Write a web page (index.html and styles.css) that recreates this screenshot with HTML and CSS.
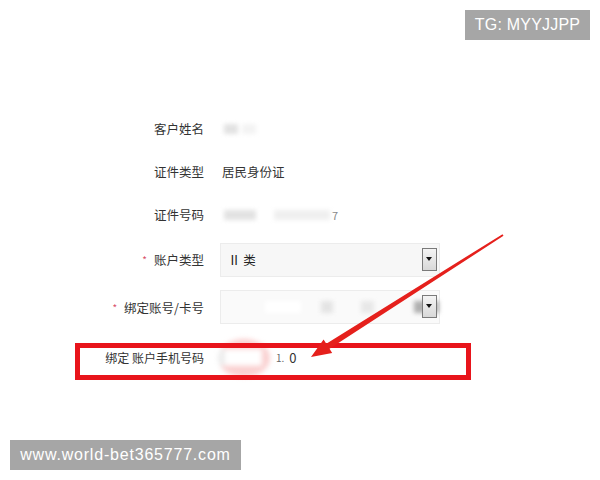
FILE: index.html
```html
<!DOCTYPE html>
<html lang="zh">
<head>
    <meta charset="UTF-8">
    <title>绑定账户信息</title>
    <link rel="stylesheet" href="styles.css">
</head>
<body>
    <div class="form">
        <div class="row">
            <div class="label">客户姓名</div>
            <div class="value"><span class="blur blur-name"></span></div>
        </div>
        <div class="row">
            <div class="label">证件类型</div>
            <div class="value">居民身份证</div>
        </div>
        <div class="row">
            <div class="label">证件号码</div>
            <div class="value">
                <span class="blur blur-id1"></span>
                <span class="blur blur-id2"></span>
                <span class="faint">7</span>
            </div>
        </div>
        <div class="row row-select">
            <div class="label"><span class="req">*</span>账户类型</div>
            <div class="select">
                <span class="select-text">Ⅱ 类</span>
                <span class="drop"></span>
            </div>
        </div>
        <div class="row row-select">
            <div class="label"><span class="req">*</span>绑定账号/卡号</div>
            <div class="select select-blurred">
                <span class="blur blur-c1"></span>
                <span class="blur blur-c2"></span>
                <span class="blur blur-c3"></span>
                <span class="blur blur-c4"></span>
                <span class="drop"></span>
            </div>
        </div>
        <div class="row row-phone">
            <div class="label label-phone">绑定 账户手机号码</div>
            <div class="value">
                <span class="blur blur-phone"></span>
                <span class="phone-dot">1.</span>
                <span class="phone-tail">0</span>
            </div>
        </div>
    </div>

    <!-- пометки поверх скриншота -->
    <div class="highlight"></div>
    <svg class="arrow" width="600" height="480" viewBox="0 0 600 480">
        <polygon fill="#e5201c" points="503.5,235.8 329.5,348.7 332.2,352.9 311,357 323.6,339.5 326.3,343.7 502.5,234.2"/>
    </svg>

    <div class="mark mark-tg">TG: MYYJJPP</div>
    <div class="mark mark-site">www.world-bet365777.com</div>
</body>
</html>
```

FILE: styles.css
```css
body {
    margin: 0;
    background: #fff;
    font-family: "Noto Sans CJK SC", "Noto Sans", sans-serif;
    font-size: 12.5px;
    color: #333;
    width: 600px;
    height: 480px;
    position: relative;
    overflow: hidden;
}

.form {
    padding-top: 107px;
}

.row {
    display: flex;
    align-items: center;
    height: 43px;
}

.row-select {
    height: 47px;
}

.row-select + .row-select {
    height: 48px;
}

.row-phone {
    margin-top: 5px;
}

.label {
    width: 204px;
    text-align: right;
    flex-shrink: 0;
    white-space: nowrap;
}

.label-phone {
    font-size: 12px;
}

.req {
    color: #d9506a;
    font-size: 10px;
    margin-right: 7px;
    position: relative;
    top: -1px;
}

.value {
    margin-left: 18px;
    display: flex;
    align-items: center;
    position: relative;
}

.faint {
    color: #888;
    font-size: 11px;
    margin-left: 2px;
}

.blur {
    display: inline-block;
    filter: blur(2px);
}

.blur-name {
    width: 14px;
    height: 10px;
    background: #e2e2e2;
    box-shadow: 18px 0 0 #f3f3f3;
    margin-left: 2px;
}

.blur-id1 {
    width: 32px;
    height: 10px;
    background: #e2e2e2;
    margin-left: 2px;
}

.blur-id2 {
    width: 56px;
    height: 10px;
    background: #efefef;
    margin-left: 18px;
}

.select {
    margin-left: 16px;
    width: 218px;
    height: 32px;
    border: 1px solid #ececec;
    background: #f7f7f7;
    display: flex;
    align-items: center;
    position: relative;
}

.select-text {
    margin-left: 7px;
    color: #222;
}

.select-blurred {
    background: #fafafa;
}

.blur-c1 {
    width: 40px;
    height: 12px;
    background: #fff;
    margin-left: 44px;
}

.blur-c2 {
    width: 14px;
    height: 12px;
    background: #e4e4e4;
    margin-left: 20px;
}

.blur-c3 {
    width: 14px;
    height: 12px;
    background: #e8e8e8;
    margin-left: 28px;
}

.blur-c4 {
    width: 28px;
    height: 12px;
    background: #b0b0b0;
    margin-left: 40px;
}

.drop {
    position: absolute;
    right: 2px;
    top: 4px;
    width: 13px;
    height: 21px;
    border: 1px solid #7a7a7a;
    background: linear-gradient(#f4f4f4, #d8d8d8);
}

.drop::after {
    content: "";
    position: absolute;
    left: 3px;
    top: 8px;
    border-left: 3.5px solid transparent;
    border-right: 3.5px solid transparent;
    border-top: 4px solid #111;
}

.blur-phone {
    width: 52px;
    height: 38px;
    border-radius: 50%;
    margin-left: -4px;
    filter: blur(2.5px);
    background:
        linear-gradient(90deg, #ececec 0 14%, #ffffff 14% 84%, transparent 84%) center / 100% 44% no-repeat,
        #fad0d0;
}

.phone-dot {
    margin-left: 6px;
    font-size: 10px;
    color: #666;
}

.phone-tail {
    margin-left: 5px;
    color: #333;
    font-size: 13px;
}

.highlight {
    position: absolute;
    left: 75px;
    top: 343px;
    width: 386px;
    height: 27px;
    border: 5px solid #e8141b;
}

.arrow {
    position: absolute;
    left: 0;
    top: 0;
}

.mark {
    position: absolute;
    background: #a6a6a6;
    color: #fff;
    font-family: "Liberation Sans", Arial, sans-serif;
    font-size: 16px;
    height: 30px;
    line-height: 30px;
    text-align: center;
}

.mark-tg {
    left: 465px;
    top: 10px;
    width: 125px;
    letter-spacing: 0.2px;
}

.mark-site {
    left: 10px;
    top: 440px;
    width: 231px;
    letter-spacing: 0.8px;
}
```
